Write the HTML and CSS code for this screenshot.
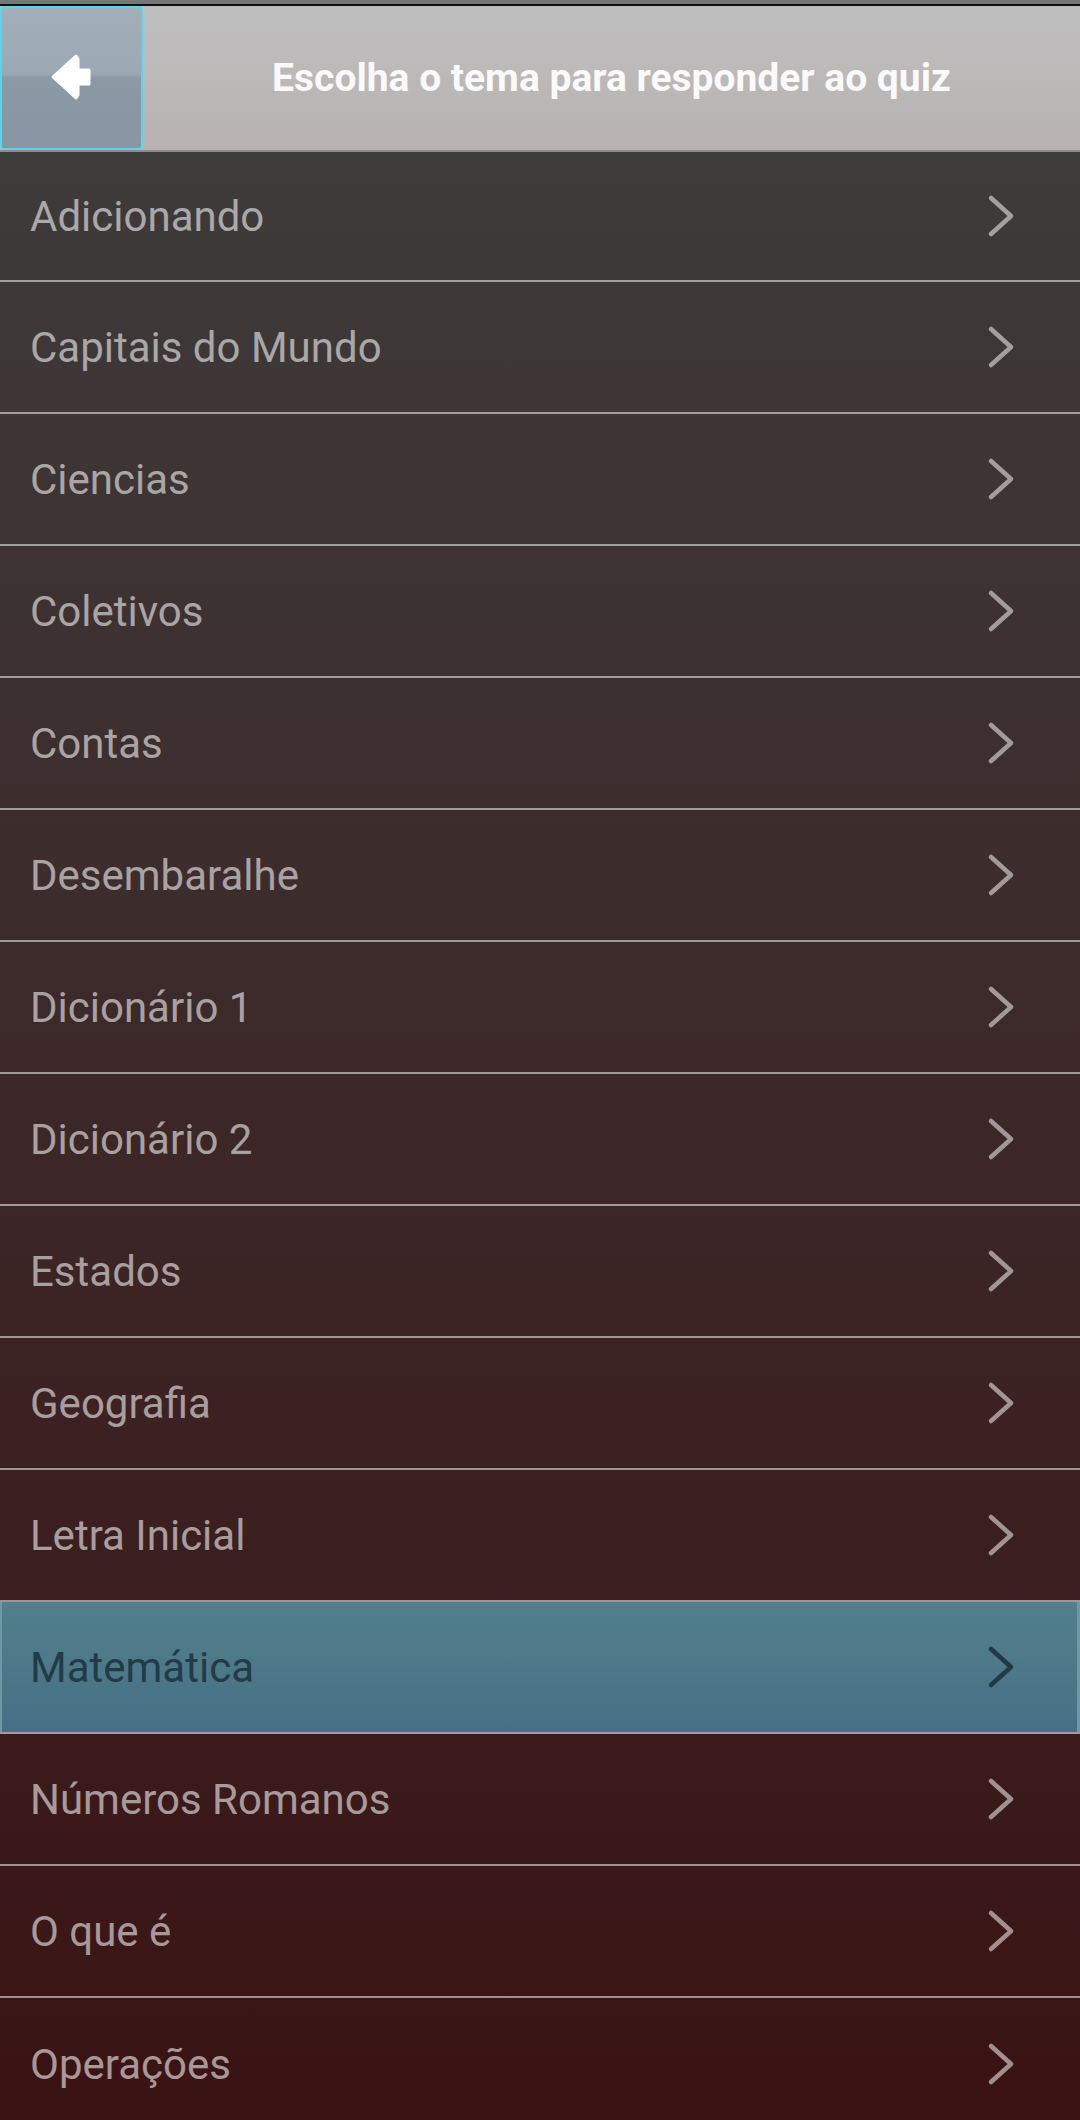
FILE: index.html
```html
<!DOCTYPE html>
<html lang="pt">
<head>
<meta charset="utf-8">
<title>Escolha o tema</title>
<link rel="stylesheet" href="styles.css">
</head>
<body>
<div class="screen">
  <div class="topstrip"></div>
  <header class="header">
    <button class="back" aria-label="Voltar">
      <svg width="42" height="50" viewBox="0 0 42 50">
        <path d="M3 24 L26 3 L28 6 L28 17 L39 17 L39 31 L28 31 L28 42 L26 45 Z" fill="#fff" stroke="#fff" stroke-width="3" stroke-linejoin="round"/>
      </svg>
    </button>
    <h1 class="title">Escolha o tema para responder ao quiz</h1>
  </header>
  <ul class="list">
    <li class="row"><span class="label">Adicionando</span><svg class="chev" width="30" height="44" viewBox="0 0 30 44"><polyline points="4,4 24,22 4,40"/></svg></li>
    <li class="row"><span class="label">Capitais do Mundo</span><svg class="chev" width="30" height="44" viewBox="0 0 30 44"><polyline points="4,4 24,22 4,40"/></svg></li>
    <li class="row"><span class="label">Ciencias</span><svg class="chev" width="30" height="44" viewBox="0 0 30 44"><polyline points="4,4 24,22 4,40"/></svg></li>
    <li class="row"><span class="label">Coletivos</span><svg class="chev" width="30" height="44" viewBox="0 0 30 44"><polyline points="4,4 24,22 4,40"/></svg></li>
    <li class="row"><span class="label">Contas</span><svg class="chev" width="30" height="44" viewBox="0 0 30 44"><polyline points="4,4 24,22 4,40"/></svg></li>
    <li class="row"><span class="label">Desembaralhe</span><svg class="chev" width="30" height="44" viewBox="0 0 30 44"><polyline points="4,4 24,22 4,40"/></svg></li>
    <li class="row"><span class="label">Dicionário 1</span><svg class="chev" width="30" height="44" viewBox="0 0 30 44"><polyline points="4,4 24,22 4,40"/></svg></li>
    <li class="row"><span class="label">Dicionário 2</span><svg class="chev" width="30" height="44" viewBox="0 0 30 44"><polyline points="4,4 24,22 4,40"/></svg></li>
    <li class="row"><span class="label">Estados</span><svg class="chev" width="30" height="44" viewBox="0 0 30 44"><polyline points="4,4 24,22 4,40"/></svg></li>
    <li class="row"><span class="label">Geografia</span><svg class="chev" width="30" height="44" viewBox="0 0 30 44"><polyline points="4,4 24,22 4,40"/></svg></li>
    <li class="row"><span class="label">Letra Inicial</span><svg class="chev" width="30" height="44" viewBox="0 0 30 44"><polyline points="4,4 24,22 4,40"/></svg></li>
    <li class="row active"><span class="label">Matemática</span><svg class="chev" width="30" height="44" viewBox="0 0 30 44"><polyline points="4,4 24,22 4,40"/></svg></li>
    <li class="row"><span class="label">Números Romanos</span><svg class="chev" width="30" height="44" viewBox="0 0 30 44"><polyline points="4,4 24,22 4,40"/></svg></li>
    <li class="row"><span class="label">O que é</span><svg class="chev" width="30" height="44" viewBox="0 0 30 44"><polyline points="4,4 24,22 4,40"/></svg></li>
    <li class="row"><span class="label">Operações</span><svg class="chev" width="30" height="44" viewBox="0 0 30 44"><polyline points="4,4 24,22 4,40"/></svg></li>
  </ul>
</div>
</body>
</html>
```
FILE: styles.css
```css
* { box-sizing: border-box; }
html, body {
  margin: 0;
  padding: 0;
  width: 1080px;
  height: 2120px;
  overflow: hidden;
  background: #3a1314;
  font-family: Roboto, "Liberation Sans", Arial, sans-serif;
}
.screen {
  width: 1080px;
  height: 2120px;
  overflow: hidden;
  display: flex;
  flex-direction: column;
  background: linear-gradient(#3e3b3b 0, #3e3b3b 152px, #3a1314 2120px);
}
.topstrip {
  height: 6px;
  background: #777777;
  border-bottom: 2px solid #111;
  flex: none;
}
.header {
  flex: none;
  height: 146px;
  display: flex;
  align-items: stretch;
  background: linear-gradient(#bfbfbf, #b8b2b2);
  border-bottom: 2px solid #8f8b8b;
}
.back {
  width: 143px;
  margin: 0;
  padding: 0;
  border: 2px solid #62cfee;
  border-radius: 4px;
  background: linear-gradient(#a2afb9 0%, #9ba9b4 47%, #8b99a5 50%, #8796a2 100%);
  display: flex;
  align-items: center;
  justify-content: center;
}
.back svg { display: block; margin-left: -2px; }
.title {
  flex: 1;
  margin: 0;
  padding-right: 0;
  display: flex;
  align-items: center;
  justify-content: center;
  color: #fafafa;
  font-size: 39px;
  font-weight: 700;
}
.list {
  list-style: none;
  margin: 0;
  padding: 0;
}
.row {
  height: 132px;
  display: flex;
  align-items: center;
  justify-content: space-between;
  padding: 0 63px 0 30px;
  border-bottom: 2px solid rgba(255, 255, 255, 0.52);
}
.row:first-child { height: 130px; }
.row:last-child { border-bottom: none; }
.label {
  font-size: 42px;
  color: rgba(255, 255, 255, 0.56);
}
.chev polyline {
  fill: none;
  stroke: rgba(255, 255, 255, 0.52);
  stroke-width: 4.5;
  stroke-linecap: round;
  stroke-linejoin: round;
}
.row.active {
  background: linear-gradient(#527f8c, #4d7888 50%, #466f85);
  box-shadow: inset 2px 0 0 #6f98a5, inset -3px 0 0 #6f98a5;
  border-bottom-color: #a29c9c;
}
.row.active .label { color: #223b48; }
.row.active .chev polyline { stroke: #223844; }
```
